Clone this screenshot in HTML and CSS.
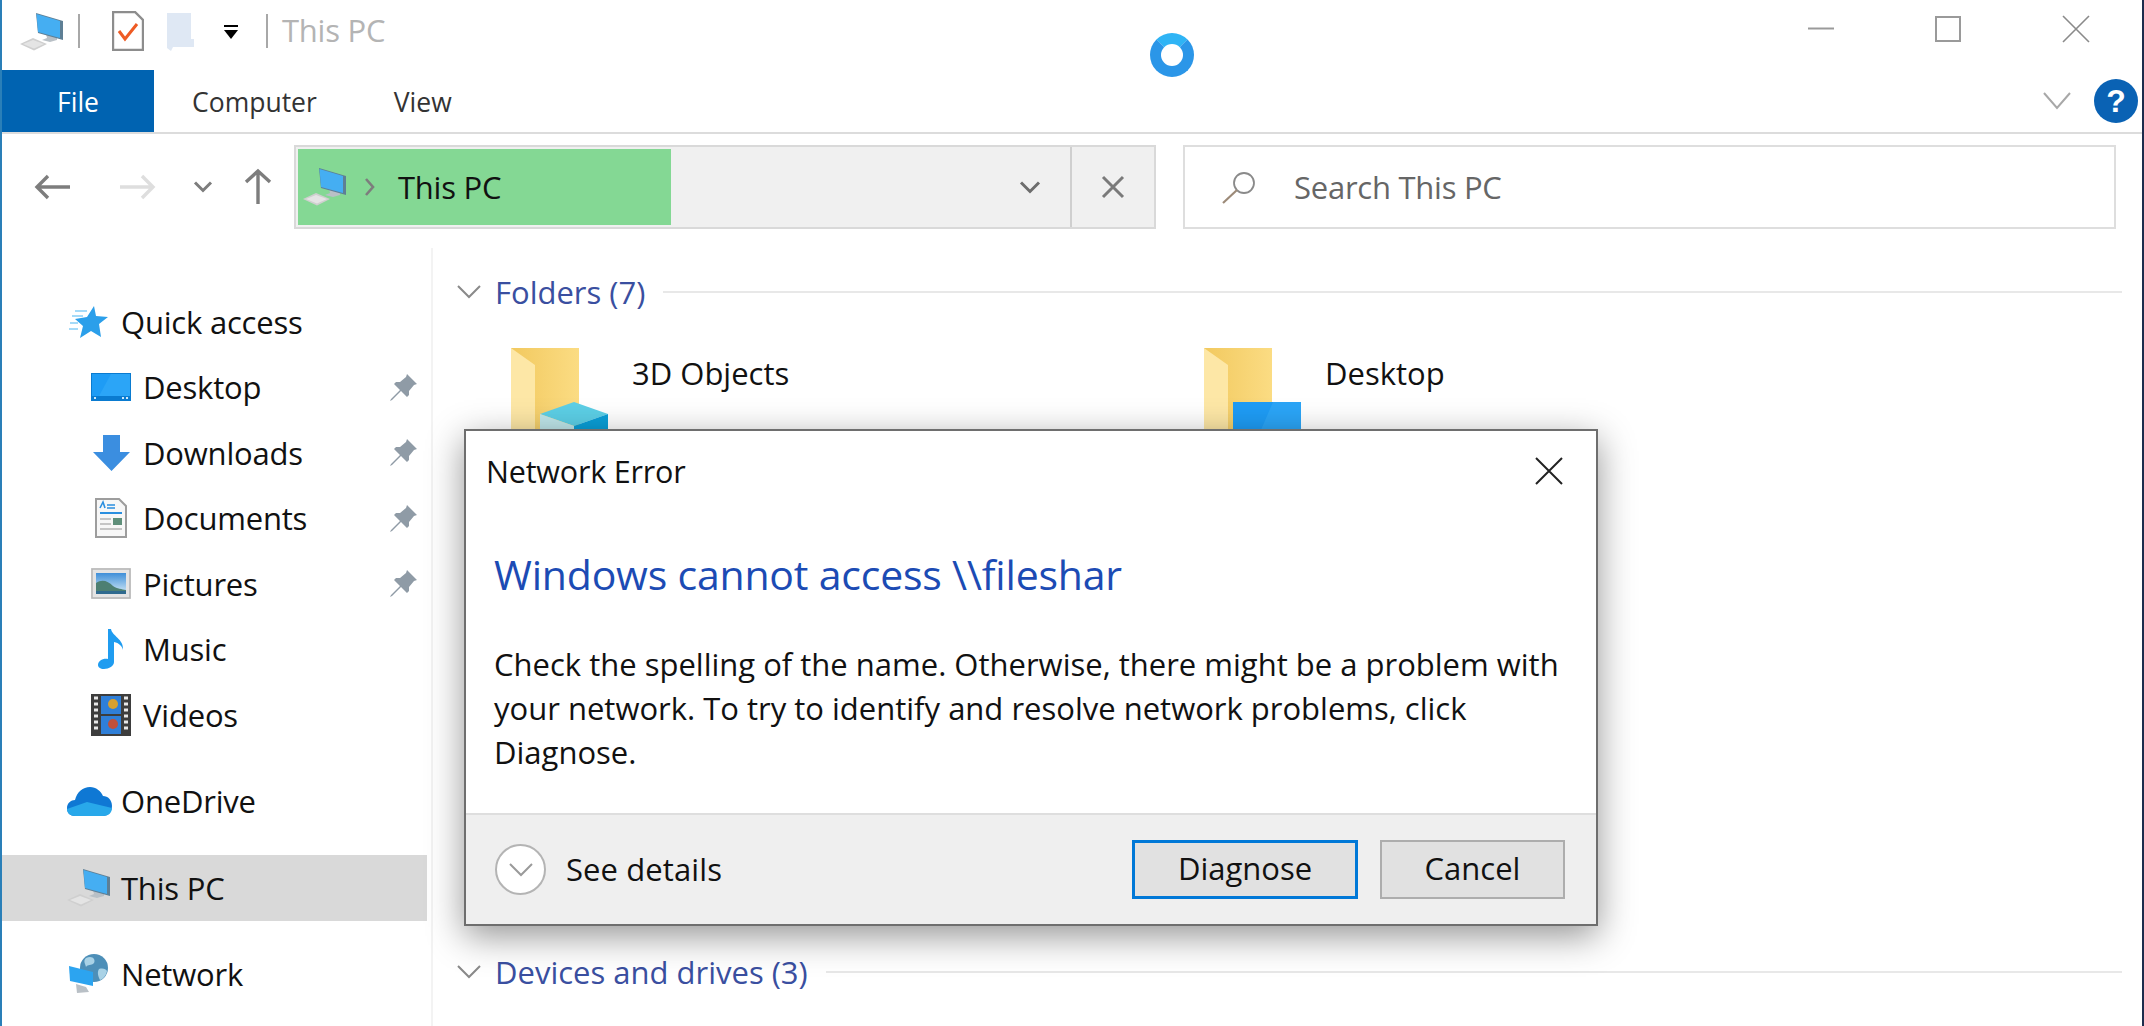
FILE: index.html
```html
<!DOCTYPE html>
<html lang="en">
<head>
<meta charset="utf-8">
<title>This PC</title>
<link rel="stylesheet" href="styles.css">
</head>
<body>
<svg class="defs" width="0" height="0">
  <defs>
    <linearGradient id="fold-right" x1="0" y1="0" x2="1" y2="0">
      <stop offset="0" stop-color="#f2c95f"/>
      <stop offset="1" stop-color="#fbdc83"/>
    </linearGradient>
    <linearGradient id="pic-sky" x1="0" y1="0" x2="0" y2="1">
      <stop offset="0" stop-color="#3f8fd8"/>
      <stop offset="1" stop-color="#d7ecf8"/>
    </linearGradient>
    <symbol id="pc" viewBox="0 0 44 38">
      <polygon points="0,31 13,25 27,31 14,37.5" fill="#cfcfcf"/>
      <polygon points="3,31 13,27 24,31 14,35.5" fill="#e4e4e4"/>
      <polygon points="26,21 37,24 37,27 30,29 22,27 27,25" fill="#b9c0c6"/>
      <polygon points="16,0 43,8 43,27 18,20" fill="#5e7f95"/>
      <polygon points="16.5,1 40,8 40,25 18,19" fill="#45aef2"/>
    </symbol>
    <symbol id="pin" viewBox="0 0 27 27">
      <path d="M17 0l10 10-3 1-5 6 0 4-2 2-6-6-9 9-2 1 1-2 9-9-6-6 2-2 4 0 6-5z" fill="#8f9ba6"/>
    </symbol>
    <symbol id="folder" viewBox="0 0 68 82">
      <rect width="68" height="82" fill="url(#fold-right)"/>
      <polygon points="0,0 24,17 24,82 0,82" fill="#fde7a6"/>
    </symbol>
  </defs>
</svg>

<div class="window">
  <div class="title-row">
    <svg class="ti-pc" width="44" height="38"><use href="#pc"/></svg>
    <span class="sep"></span>
    <svg class="ti-check" width="32" height="40" viewBox="0 0 32 40">
      <path d="M1 1h22l8 8v30H1z" fill="#fff" stroke="#8d8d8d" stroke-width="2.400"/>
      <path d="M7 20l6 8L25 13" fill="none" stroke="#ee5b24" stroke-width="3"/>
    </svg>
    <svg class="ti-folder" width="27" height="38" viewBox="0 0 27 38">
      <polygon points="0,0 24,0 24,26 27,26 27,34 6,34 4,38 0,35" fill="#dfe8f4"/>
    </svg>
    <svg class="ti-drop" width="16" height="15" viewBox="0 0 16 15">
      <rect x="1" y="0" width="14" height="2"/>
      <polygon points="1,5 15,5 8,14"/>
    </svg>
    <span class="sep sep-2"></span>
    <span class="title-text">This PC</span>
    <div class="win-controls">
      <svg width="26" height="26" viewBox="0 0 26 26"><path d="M0 12.5h26" stroke="#9a9a9a" stroke-width="2"/></svg>
      <svg width="26" height="26" viewBox="0 0 26 26"><rect x="1" y="1" width="24" height="24" fill="none" stroke="#9a9a9a" stroke-width="2"/></svg>
      <svg width="28" height="28" viewBox="0 0 28 28"><path d="M1 1l26 26M27 1L1 27" stroke="#8a8a8a" stroke-width="1.600"/></svg>
    </div>
  </div>

  <div class="ribbon">
    <span class="tab tab-file">File</span>
    <span class="tab tab-computer">Computer</span>
    <span class="tab tab-view">View</span>
    <svg class="ribbon-chevron" width="28" height="18" viewBox="0 0 28 18"><path d="M1 1l13 15L27 1" fill="none" stroke="#a8a8a8" stroke-width="2"/></svg>
    <span class="help">?</span>
  </div>

  <div class="address-row">
    <svg class="nav-back" width="36" height="26" viewBox="0 0 36 26"><path d="M36 13H3M14 2L3 13l11 11" fill="none" stroke="#7d7d7d" stroke-width="3.400"/></svg>
    <svg class="nav-forward" width="36" height="26" viewBox="0 0 36 26"><path d="M0 13h33M22 2l11 11-11 11" fill="none" stroke="#dedede" stroke-width="3.400"/></svg>
    <svg class="nav-recent" width="20" height="12" viewBox="0 0 20 12"><path d="M2 1.500l8 8 8-8" fill="none" stroke="#7d7d7d" stroke-width="3"/></svg>
    <svg class="nav-up" width="28" height="36" viewBox="0 0 28 36"><path d="M14 36V3M2 14L14 3l12 11" fill="none" stroke="#7d7d7d" stroke-width="3.400"/></svg>
    <div class="address-box">
      <div class="crumb">
        <svg class="crumb-pc" width="44" height="38"><use href="#pc"/></svg>
        <svg class="crumb-chevron" width="10" height="18" viewBox="0 0 10 18"><path d="M1 1l7 8-7 8" fill="none" stroke="#7d7d7d" stroke-width="2.600"/></svg>
        <span class="crumb-text">This PC</span>
      </div>
      <div class="address-end">
        <svg width="22" height="13" viewBox="0 0 22 13"><path d="M2 1.500l9 9 9-9" fill="none" stroke="#6d6d6d" stroke-width="3"/></svg>
      </div>
      <div class="address-stop">
        <svg width="24" height="24" viewBox="0 0 24 24"><path d="M2 2l20 20M22 2L2 22" stroke="#7a7a7a" stroke-width="3"/></svg>
      </div>
    </div>
    <div class="search-box">
      <svg width="36" height="33" viewBox="0 0 36 33"><circle cx="23" cy="12" r="10" fill="none" stroke="#8a8a8a" stroke-width="1.800"/><path d="M16 19L2 32" stroke="#9c8a78" stroke-width="2.200"/></svg>
      <span class="search-text">Search This PC</span>
    </div>
  </div>

  <div class="main">
    <nav class="sidebar">
      <div class="nav-group">
        <div class="nav-row">
          <span class="slot"><svg width="40" height="32" viewBox="0 0 40 32">
            <polygon points="25,0 27,10 39,11 30,18 32,31 22,25 11,32 14,20 6,13 18,11" fill="#2b9fea"/>
            <path d="M6 5h12M3 10h11M1 17h8M0 23h9" stroke="#a5daf8" stroke-width="2"/>
          </svg></span>
          <span class="nav-label">Quick access</span>
        </div>
        <div class="nav-row nav-sub">
          <span class="slot"><svg width="40" height="28" viewBox="0 0 40 28">
            <rect width="40" height="28" fill="#0a7bd0"/>
            <rect x="1" y="1" width="38" height="22" fill="#1e9cf5"/>
            <polygon points="20,1 39,1 39,23 8,23" fill="#2ba5f7"/>
            <path d="M3 25h2M31 25h2M35 25h2" stroke="#cfe9fb" stroke-width="2"/>
          </svg></span>
          <span class="nav-label">Desktop</span>
          <svg class="pin" width="27" height="27"><use href="#pin"/></svg>
        </div>
        <div class="nav-row nav-sub">
          <span class="slot"><svg width="37" height="36" viewBox="0 0 37 36">
            <polygon points="10,0 27,0 27,17 37,17 18.500,36 0,17 10,17" fill="#3b8ee0"/>
          </svg></span>
          <span class="nav-label">Downloads</span>
          <svg class="pin" width="27" height="27"><use href="#pin"/></svg>
        </div>
        <div class="nav-row nav-sub">
          <span class="slot"><svg width="32" height="40" viewBox="0 0 32 40">
            <path d="M1 1h23l7 7v31H1z" fill="#f7f7f7" stroke="#9d9d9d" stroke-width="2"/>
            <path d="M5 10l3-6 2 6M12 7h8M12 10h8" fill="none" stroke="#2a8fe0" stroke-width="1.600"/>
            <path d="M5 15h22" stroke="#2a8fe0" stroke-width="2"/>
            <path d="M5 21h11M5 26h11M5 31h22" stroke="#b5b5b5" stroke-width="1.500"/>
            <rect x="18" y="20" width="9" height="7" fill="#5f8f7a"/>
          </svg></span>
          <span class="nav-label">Documents</span>
          <svg class="pin" width="27" height="27"><use href="#pin"/></svg>
        </div>
        <div class="nav-row nav-sub">
          <span class="slot"><svg width="40" height="31" viewBox="0 0 40 31">
            <rect width="40" height="31" fill="#e4e4e4"/>
            <rect x="1" y="1" width="38" height="29" fill="none" stroke="#b5b5b5" stroke-width="1.500"/>
            <rect x="5" y="5" width="30" height="21" fill="url(#pic-sky)"/>
            <path d="M5 15c6-4 12-2 17 3 4 3 9 3 13 4v4H5z" fill="#4d7f72"/>
            <path d="M5 23h30v3H5z" fill="#2f6a8f"/>
          </svg></span>
          <span class="nav-label">Pictures</span>
          <svg class="pin" width="27" height="27"><use href="#pin"/></svg>
        </div>
        <div class="nav-row nav-sub">
          <span class="slot"><svg width="26" height="40" viewBox="0 0 26 40">
            <path d="M13 0c1 7 13 10 12 21-1-4-4-7-9-8v20c0 4-5 7-10 7-4 0-6-2-6-4 0-4 5-7 10-6V0z" fill="#1f9cf0"/>
          </svg></span>
          <span class="nav-label">Music</span>
        </div>
        <div class="nav-row nav-sub">
          <span class="slot"><svg width="40" height="42" viewBox="0 0 40 42">
            <rect width="40" height="42" fill="#3d3d3d"/>
            <rect x="10" y="2" width="20" height="18" fill="#2f7fd8"/>
            <rect x="10" y="22" width="20" height="18" fill="#2f7fd8"/>
            <circle cx="22" cy="10" r="5" fill="#d8a030"/>
            <circle cx="22" cy="30" r="5" fill="#c0503a"/>
            <path d="M3 4h4M3 10h4M3 16h4M3 22h4M3 28h4M3 34h4M33 4h4M33 10h4M33 16h4M33 22h4M33 28h4M33 34h4" stroke="#e8e8e8" stroke-width="3"/>
          </svg></span>
          <span class="nav-label">Videos</span>
        </div>
      </div>
      <div class="nav-group">
        <div class="nav-row">
          <span class="slot"><svg width="45" height="30" viewBox="0 0 45 30">
            <path d="M8 30C2 30 0 26 0 22c0-5 4-8 8-8 2-8 8-13 15-13 6 0 11 4 13 9 5 0 9 4 9 10 0 6-4 10-9 10z" fill="#0f78d4"/>
            <path d="M8 30c-5 0-8-3-8-7l20-7 25 6c0 5-4 8-9 8z" fill="#28a8ea"/>
          </svg></span>
          <span class="nav-label">OneDrive</span>
        </div>
      </div>
      <div class="nav-group">
        <div class="nav-row nav-selected">
          <span class="slot"><svg width="44" height="38"><use href="#pc"/></svg></span>
          <span class="nav-label">This PC</span>
        </div>
      </div>
      <div class="nav-group">
        <div class="nav-row">
          <span class="slot"><svg width="40" height="40" viewBox="0 0 40 40">
            <circle cx="25" cy="14" r="14" fill="#4d8fb8"/>
            <path d="M17 4c6-3 10 1 8 5-3 3-6 1-8 4-1-4-3-6 0-9zM30 15c4-1 7 0 8 2-1 5-4 8-7 9-2-4-3-8-1-11z" fill="#a9d2e6"/>
            <polygon points="0,12 24,18 24,32 1,27" fill="#2ca4f0"/>
            <polygon points="7,30 17,33 20,38 8,39" fill="#b9c0c6"/>
          </svg></span>
          <span class="nav-label">Network</span>
        </div>
      </div>
    </nav>

    <section class="content">
      <div class="group-head">
        <svg width="24" height="14" viewBox="0 0 24 14"><path d="M1 1l11 11L23 1" fill="none" stroke="#8a8a8a" stroke-width="2"/></svg>
        <span class="group-title">Folders (7)</span>
        <span class="group-line"></span>
      </div>
      <div class="folders">
        <div class="folder-item">
          <span class="folder-icon">
            <svg width="68" height="82"><use href="#folder"/></svg>
            <svg class="overlay" width="68" height="42" viewBox="0 0 68 42">
              <polygon points="0,12 34,0 68,12 34,24" fill="#5ccfe6"/>
              <polygon points="0,12 34,24 34,42 0,42" fill="#bfe6ea"/>
              <polygon points="68,12 34,24 34,42 68,42" fill="#0a9fd8"/>
            </svg>
          </span>
          <span class="folder-name">3D Objects</span>
        </div>
        <div class="folder-item">
          <span class="folder-icon">
            <svg width="68" height="82"><use href="#folder"/></svg>
            <svg class="overlay" width="68" height="42" viewBox="0 0 68 42">
              <rect width="68" height="42" fill="#1e9cf5"/>
              <polygon points="40,0 68,0 68,42 22,42" fill="#2ba5f7"/>
            </svg>
          </span>
          <span class="folder-name">Desktop</span>
        </div>
      </div>
      <div class="group-head">
        <svg width="24" height="14" viewBox="0 0 24 14"><path d="M1 1l11 11L23 1" fill="none" stroke="#8a8a8a" stroke-width="2"/></svg>
        <span class="group-title">Devices and drives (3)</span>
        <span class="group-line"></span>
      </div>
    </section>
  </div>

  <div class="spinner"></div>

  <div class="dialog">
    <div class="dialog-bar">
      <span class="dialog-caption">Network Error</span>
      <svg width="28" height="28" viewBox="0 0 28 28"><path d="M1 1l26 26M27 1L1 27" stroke="#222" stroke-width="2"/></svg>
    </div>
    <div class="dialog-body">
      <h1 class="dialog-heading">Windows cannot access \\fileshar</h1>
      <p class="dialog-text">Check the spelling of the name. Otherwise, there might be a problem with your network. To try to identify and resolve network problems, click Diagnose.</p>
    </div>
    <div class="dialog-foot">
      <span class="expand"><svg width="26" height="16" viewBox="0 0 26 16"><path d="M2 2l11 11L24 2" fill="none" stroke="#9a9a9a" stroke-width="2"/></svg></span>
      <span class="see-details">See details</span>
      <button class="btn btn-primary">Diagnose</button>
      <button class="btn">Cancel</button>
    </div>
  </div>
</div>
</body>
</html>
```
FILE: styles.css
```css
* { box-sizing: border-box; }
html, body { margin: 0; padding: 0; background: #fff; }
body { font-family: "Open Sans", "Noto Sans", sans-serif; color: #111; }
.defs { position: absolute; }
svg { display: block; flex: none; }

.window {
  position: relative;
  width: 2144px;
  height: 1026px;
  overflow: hidden;
  background: #fff;
  border-left: 2px solid #2a7fb8;
  border-right: 2px solid #1d2c4d;
  display: flex;
  flex-direction: column;
}

/* title bar */
.title-row { height: 70px; display: flex; align-items: center; padding: 0 0 8px 18px; }
.ti-pc { margin-top: 2px; }
.sep { width: 2px; height: 34px; background: #a8a8a8; margin-left: 14px; }
.ti-check { margin-left: 32px; }
.ti-folder { margin-left: 23px; margin-top: 2px; }
.ti-drop { margin-left: 29px; margin-top: 3px; }
.sep-2 { margin-left: 27px; }
.title-text { margin-left: 14px; font-size: 31px; color: #b4b4b4; letter-spacing: -0.25px; margin-top: -2px; }
.win-controls { margin-left: auto; margin-right: 52px; margin-top: -4px; display: flex; align-items: center; gap: 101px; }

/* ribbon */
.ribbon {
  height: 64px;
  display: flex;
  align-items: center;
  border-bottom: 2px solid #dcdcdc;
  font-size: 26.500px;
  color: #333;
}
.tab { line-height: 64px; height: 62px; }
.tab-file { width: 152px; background: #0063b1; color: #fff; text-align: center; }
.tab-computer { margin-left: 38px; }
.tab-view { margin-left: 77px; }
.ribbon-chevron { margin-left: auto; }
.help {
  width: 44px;
  height: 44px;
  margin: 0 4px 0 23px;
  border-radius: 50%;
  background: #0a62b4;
  color: #fff;
  font: bold 32px/44px "Liberation Sans", sans-serif;
  text-align: center;
}

/* address row */
.address-row { height: 114px; padding: 11px 26px 19px 0; display: flex; align-items: center; }
.nav-back { margin-left: 32px; }
.nav-forward { margin-left: 50px; }
.nav-recent { margin-left: 37px; }
.nav-up { margin-left: 31px; margin-top: -2px; }
.address-box {
  margin-left: 22px;
  width: 862px;
  height: 84px;
  display: flex;
  background: #f0f0f0;
  border: 2px solid #d9d9d9;
}
.crumb {
  width: 373px;
  margin: 2px 0;
  background: #84d894;
  display: flex;
  align-items: center;
  padding-left: 5px;
  margin-left: 2px;
}
.crumb-chevron { margin-left: 18px; }
.crumb-text { margin-left: 23px; font-size: 31px; color: #111; letter-spacing: -0.25px; }
.address-end { flex: 1; display: flex; align-items: center; justify-content: flex-end; padding-right: 29px; }
.address-stop { width: 84px; border-left: 2px solid #cfcfcf; display: flex; align-items: center; justify-content: center; }
.search-box {
  margin-left: 27px;
  flex: 1;
  height: 84px;
  border: 2px solid #dedede;
  display: flex;
  align-items: center;
  padding-left: 36px;
}
.search-text { margin-left: 37px; font-size: 31px; color: #666; letter-spacing: -0.25px; }

/* main */
.main { flex: 1; display: flex; min-height: 0; }
.sidebar {
  width: 431px;
  padding: 41px 4px 0 0;
  border-right: 2px solid #f3f3f3;
  display: flex;
  flex-direction: column;
  gap: 21px;
}
.nav-row { height: 65.500px; display: flex; align-items: center; padding-left: 63px; }
.nav-sub { padding-left: 85px; }
.slot { width: 48px; display: flex; justify-content: center; }
.nav-label { margin-left: 8px; font-size: 31px; color: #111; letter-spacing: -0.2px; }
.pin { margin-left: auto; margin-right: 10px; }
.nav-selected { background: #d9d9d9; }

.content { flex: 1; padding: 31px 20px 0 24px; }
.group-head { height: 26px; display: flex; align-items: center; }
.group-title { margin-left: 14px; font-size: 31px; color: #3a4fa0; white-space: nowrap; }
.group-line { flex: 1; height: 2px; margin-left: 18px; background: #e8e8e8; }
.folders { height: 654px; padding: 43px 0 0 54px; display: grid; grid-template-columns: 693px 1fr; align-content: start; }
.folder-item { display: flex; }
.folder-icon { position: relative; width: 97px; height: 96px; margin-right: 24px; }
.overlay { position: absolute; left: 29px; bottom: 0; }
.folder-name { margin-top: 4px; font-size: 31px; color: #111; }

/* spinner */
.spinner {
  position: absolute;
  left: 1148px;
  top: 33px;
  width: 44px;
  height: 44px;
  border-radius: 50%;
  border: 11px solid #2b96e8;
  border-top-color: #2fb4f5;
}

/* dialog */
.dialog {
  position: absolute;
  left: 462px;
  top: 429px;
  width: 1134px;
  height: 497px;
  background: #fff;
  border: 2px solid #6e6e6e;
  box-shadow: 0 10px 34px rgba(0, 0, 0, .42);
  display: flex;
  flex-direction: column;
}
.dialog-bar { height: 80px; display: flex; align-items: center; justify-content: space-between; padding: 0 33px 0 20px; }
.dialog-caption { font-size: 30.500px; color: #111; letter-spacing: -0.2px; }
.dialog-body { flex: 1; padding: 0 28px; }
.dialog-heading { margin: 38px 0 0; font-size: 41px; line-height: 50px; font-weight: 400; color: #1c4bb4; letter-spacing: -0.2px; }
.dialog-text { margin: 43px 0 0; font-size: 31px; line-height: 44px; color: #111; }
.dialog-foot {
  height: 111px;
  background: #efefef;
  border-top: 2px solid #dedede;
  display: flex;
  align-items: center;
  padding: 0 31px 0 29px;
}
.expand {
  width: 51px;
  height: 51px;
  border: 2px solid #b4b4b4;
  border-radius: 50%;
  background: #fff;
  display: flex;
  align-items: center;
  justify-content: center;
}
.see-details { margin-left: 20px; margin-right: auto; font-size: 31px; color: #111; letter-spacing: 0.1px; margin-top: -2px; }
.btn {
  width: 185px;
  height: 59px;
  margin-left: 22px;
  background: #e1e1e1;
  border: 2px solid #adadad;
  font: 31px "Open Sans", "Noto Sans", sans-serif;
  color: #111;
  padding: 0 0 3px;
}
.btn-primary { width: 226px; border: 3px solid #0078d7; }
```
